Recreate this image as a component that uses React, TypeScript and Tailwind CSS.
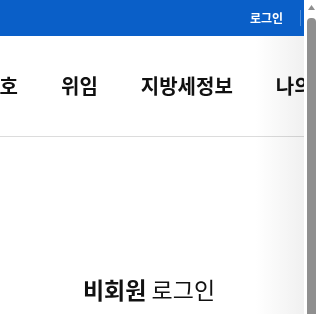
export default function App() {
  const navItems = ["납세자보호", "위임", "지방세정보", "나의지방세"]

  return (
    <div
      className="flex w-[319px] h-[314px] overflow-hidden bg-white"
      style={{ fontFamily: '"Noto Sans CJK KR", "Noto Sans", sans-serif' }}
    >
      <div className="relative flex-1 min-w-0 flex flex-col">
        {/* top utility bar */}
        <div className="h-[36px] shrink-0 bg-[#0a5fc8] flex items-center justify-end">
          <a className="text-[12px] font-bold text-white leading-none">로그인</a>
          <span className="ml-[17px] mr-[3px] w-px h-[16px] bg-[#4d8ddb]" />
        </div>

        {/* main nav, scrolled sideways */}
        <nav className="h-[101px] shrink-0 border-b border-[#dcdcdc] flex items-center overflow-hidden whitespace-nowrap">
          <ul className="flex items-center gap-[43px] ml-[-74px]">
            {navItems.map((item) => (
              <li key={item} className="text-[20px] font-bold text-[#111] leading-none">
                {item}
              </li>
            ))}
          </ul>
        </nav>

        <main className="flex-1 flex justify-center pt-[135px]">
          <h2 className="text-[23px] text-[#111] leading-[34px] ml-[-6px]">
            <strong className="font-bold">비회원</strong> 로그인
          </h2>
        </main>

        {/* right edge fade */}
        <div className="pointer-events-none absolute right-0 top-[36px] bottom-0 w-[48px] mix-blend-multiply bg-gradient-to-r from-white to-[#f0f0f0]" />
      </div>

      {/* scrollbar */}
      <div className="w-[15px] shrink-0 bg-white flex flex-col items-center">
        <svg width="15" height="15" viewBox="0 0 15 15" className="shrink-0">
          <path d="M4 10 L7.5 5 L11 10 Z" fill="#8f8f8f" />
        </svg>
        <div className="mt-[3px] w-[9px] flex-1 rounded-t-[4px] bg-[#8f8f8f]" />
      </div>
    </div>
  )
}
